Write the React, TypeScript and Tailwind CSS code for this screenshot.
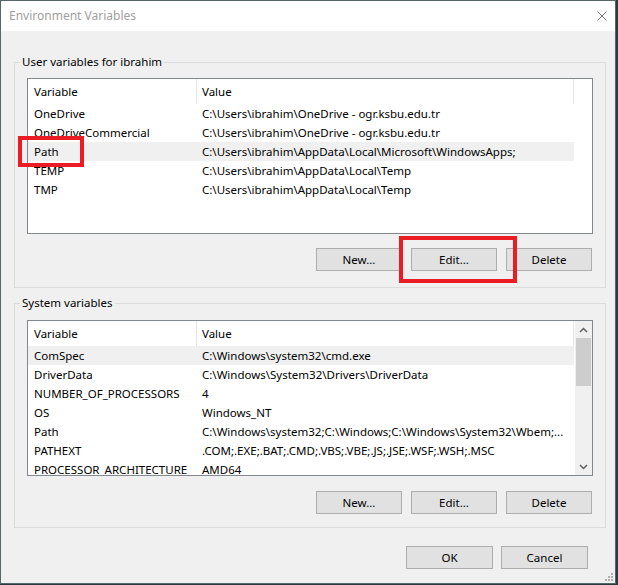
import { FC } from 'react';

interface Row {
  name: string;
  value: string;
  selected?: boolean;
}

const userRows: Row[] = [
  { name: 'OneDrive', value: 'C:\\Users\\ibrahim\\OneDrive - ogr.ksbu.edu.tr' },
  { name: 'OneDriveCommercial', value: 'C:\\Users\\ibrahim\\OneDrive - ogr.ksbu.edu.tr' },
  { name: 'Path', value: 'C:\\Users\\ibrahim\\AppData\\Local\\Microsoft\\WindowsApps;', selected: true },
  { name: 'TEMP', value: 'C:\\Users\\ibrahim\\AppData\\Local\\Temp' },
  { name: 'TMP', value: 'C:\\Users\\ibrahim\\AppData\\Local\\Temp' },
];

const systemRows: Row[] = [
  { name: 'ComSpec', value: 'C:\\Windows\\system32\\cmd.exe', selected: true },
  { name: 'DriverData', value: 'C:\\Windows\\System32\\Drivers\\DriverData' },
  { name: 'NUMBER_OF_PROCESSORS', value: '4' },
  { name: 'OS', value: 'Windows_NT' },
  { name: 'Path', value: 'C:\\Windows\\system32;C:\\Windows;C:\\Windows\\System32\\Wbem;...' },
  { name: 'PATHEXT', value: '.COM;.EXE;.BAT;.CMD;.VBS;.VBE;.JS;.JSE;.WSF;.WSH;.MSC' },
  { name: 'PROCESSOR_ARCHITECTURE', value: 'AMD64' },
];

const Button: FC<{ label: string; w?: string }> = ({ label, w = 'w-[86px]' }) => (
  <div className={`${w} h-[23px] flex items-center justify-center bg-[#e1e1e1] border border-[#adadad] text-black`}>
    {label}
  </div>
);

const VarList: FC<{ rows: Row[]; scroll?: boolean }> = ({ rows, scroll }) => (
  <div className="h-[156px] border border-[#828790] bg-white flex overflow-hidden">
    <div className="flex-1 flex flex-col overflow-hidden">
      <div className="h-[25px] shrink-0 flex items-center">
        <div className="w-[168px] pl-[6px]">Variable</div>
        <div className="w-[1px] h-full bg-[#e5e5e5]" />
        <div className="w-[376px] pl-[5px]">Value</div>
        <div className="w-[1px] h-full bg-[#e5e5e5]" />
      </div>
      {rows.map((r) => (
        <div
          key={r.name}
          className={`h-[19px] shrink-0 w-[546px] flex items-center ${r.selected ? 'bg-[#f0f0f0]' : ''}`}
        >
          <div className="w-[169px] pl-[6px] whitespace-nowrap overflow-hidden">{r.name}</div>
          <div className="w-[377px] pl-[5px] whitespace-nowrap overflow-hidden">{r.value}</div>
        </div>
      ))}
    </div>
    {scroll && (
      <div className="w-[17px] shrink-0 bg-[#f0f0f0] flex flex-col items-center">
        <div className="h-[17px] flex items-center justify-center">
          <svg width="9" height="6" viewBox="0 0 9 6">
            <path d="M1 5 L4.5 1.5 L8 5" fill="none" stroke="#606060" strokeWidth="1.5" />
          </svg>
        </div>
        <div className="w-[15px] h-[48px] bg-[#cdcdcd]" />
        <div className="flex-1" />
        <div className="h-[17px] flex items-center justify-center">
          <svg width="9" height="6" viewBox="0 0 9 6">
            <path d="M1 1 L4.5 4.5 L8 1" fill="none" stroke="#606060" strokeWidth="1.5" />
          </svg>
        </div>
      </div>
    )}
  </div>
);

interface GroupProps {
  title: string;
  rows: Row[];
  scroll?: boolean;
  className?: string;
  listGap: string;
  btnGap: string;
}

const Group: FC<GroupProps> = ({ title, rows, scroll, className = '', listGap, btnGap }) => (
  <div className={`border border-[#dcdcdc] pl-[12px] pr-[12px] ${className}`}>
    <div className="-mt-[9px] -ml-[7px] px-[2px] w-fit h-[16px] leading-[16px] bg-[#f0f0f0]">{title}</div>
    <div className={listGap}>
      <VarList rows={rows} scroll={scroll} />
    </div>
    <div className={`${btnGap} flex justify-end gap-[9px] pr-[1px]`}>
      <Button label="New..." />
      <Button label="Edit..." />
      <Button label="Delete" />
    </div>
  </div>
);

const App: FC = () => (
  <div className="w-[618px] h-[585px] bg-[#2b3a3c] font-['Noto_Sans',sans-serif] text-[11.5px] text-black">
    <div className="relative w-[616px] h-[584px] border border-[#56666a] bg-[#f0f0f0] flex flex-col">
      <div className="h-[30px] shrink-0 bg-white flex items-center justify-between pl-[8px] pr-[8px] text-[#a0a0a0] text-[12px]">
        <span>Environment Variables</span>
        <svg width="10" height="10" viewBox="0 0 10 10">
          <path d="M0.5 0.5 L9.5 9.5 M9.5 0.5 L0.5 9.5" stroke="#777777" strokeWidth="1" />
        </svg>
      </div>
      <div className="flex flex-col pl-[13px] pr-[9px]">
        <Group
          title="User variables for ibrahim"
          rows={userRows}
          listGap="mt-[8px]"
          btnGap="mt-[14px]"
          className="mt-[31px] pb-[16px]"
        />
        <Group
          title="System variables"
          rows={systemRows}
          scroll
          listGap="mt-[9px]"
          btnGap="mt-[15px]"
          className="mt-[15px] pb-[13px]"
        />
        <div className="mt-[18px] mr-[18px] flex justify-end gap-[8px]">
          <Button label="OK" w="w-[87px]" />
          <Button label="Cancel" w="w-[87px]" />
        </div>
      </div>

      {/* annotation boxes drawn over the dialog */}
      <div className="absolute left-[17px] top-[135px] w-[66px] h-[31px] border-4 border-[#ec1c24]" />
      <div className="absolute left-[398px] top-[235px] w-[118px] h-[47px] border-4 border-[#ec1c24]" />

      <svg className="absolute right-[2px] bottom-[2px]" width="9" height="9" viewBox="0 0 9 9">
        <g fill="#b0b0b0">
          <rect x="7" y="1" width="2" height="2" />
          <rect x="4" y="4" width="2" height="2" />
          <rect x="7" y="4" width="2" height="2" />
          <rect x="1" y="7" width="2" height="2" />
          <rect x="4" y="7" width="2" height="2" />
          <rect x="7" y="7" width="2" height="2" />
        </g>
      </svg>
    </div>
  </div>
);

export default App;
